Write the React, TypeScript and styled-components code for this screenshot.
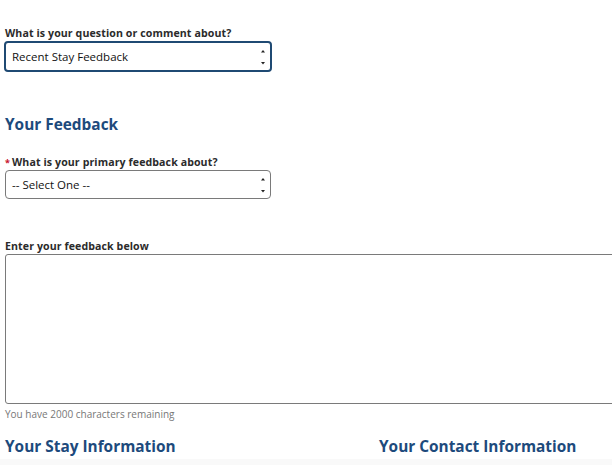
import React from "react";
import styled, { createGlobalStyle } from "styled-components";

const Global = createGlobalStyle`
  html, body { margin: 0; padding: 0; background: #fff; overflow: hidden; }
  body { font-family: "Open Sans", "Noto Sans", sans-serif; color: #333; }
`;

const Page = styled.div`
  width: 748px;
  padding: 27px 0 0 5px;
  display: flex;
  flex-direction: column;
`;

const Field = styled.div<{ $mt?: number; $mb: number }>`
  display: flex;
  flex-direction: column;
  margin-top: ${(p) => p.$mt ?? 0}px;
  margin-bottom: ${(p) => p.$mb}px;
`;

const Label = styled.label`
  font-size: 10.6px;
  font-weight: 700;
  color: #2b2b2b;
  line-height: 13px;
  margin-bottom: 1px;
  letter-spacing: 0.1px;
`;

const Star = styled.span`
  color: #c8102e;
  font-size: 9px;
  margin-right: 2px;
  vertical-align: top;
`;

const SelectBox = styled.div<{ $focus?: boolean }>`
  box-sizing: border-box;
  width: ${(p) => (p.$focus ? 268 : 266)}px;
  height: ${(p) => (p.$focus ? 31 : 29)}px;
  margin-left: ${(p) => (p.$focus ? -1 : 0)}px;
  border: ${(p) => (p.$focus ? "2px solid #1f4a73" : "1px solid #7a7a7a")};
  border-radius: 4px;
  display: flex;
  align-items: center;
  justify-content: space-between;
  padding: 0 4px 0 6px;
  font-size: 11.5px;
  color: #111;
`;

const Arrows = styled.svg`
  width: 6px;
  height: 20px;
`;

const Heading = styled.h2`
  margin: 0;
  font-size: 15.4px;
  font-weight: 700;
  color: #1d4a7c;
  line-height: 20px;
`;

const TextArea = styled.div`
  box-sizing: border-box;
  width: 100%;
  height: 150px;
  border: 1px solid #7a7a7a;
  border-radius: 3px;
`;

const Hint = styled.div`
  font-size: 10px;
  color: #777;
  margin-top: 3px;
`;

const Columns = styled.div`
  display: grid;
  grid-template-columns: 374px 1fr;
  margin-top: 16px;
`;

const Panel = styled.div`
  margin-top: 2px;
  margin-left: -5px;
  height: 40px;
  background: #f9f9f9;
`;

const Arrow = () => (
  <Arrows viewBox="0 0 6 20">
    <path d="M1 5.5 L3 3 L5 5.5 Z" fill="#222" />
    <path d="M1 15 L3 17.5 L5 15 Z" fill="#222" />
  </Arrows>
);

export default function App() {
  return (
    <>
      <Global />
      <Page>
        <Field $mb={43}>
          <Label>What is your question or comment about?</Label>
          <SelectBox $focus>
            <span>Recent Stay Feedback</span>
            <Arrow />
          </SelectBox>
        </Field>
        <Heading>Your Feedback</Heading>
        <Field $mt={21} $mb={41}>
          <Label>
            <Star>*</Star>What is your primary feedback about?
          </Label>
          <SelectBox>
            <span>-- Select One --</span>
            <Arrow />
          </SelectBox>
        </Field>
        <Field $mb={0}>
          <Label>Enter your feedback below</Label>
          <TextArea />
          <Hint>You have 2000 characters remaining</Hint>
        </Field>
        <Columns>
          <Heading>Your Stay Information</Heading>
          <Heading>Your Contact Information</Heading>
        </Columns>
        <Panel />
      </Page>
    </>
  );
}
